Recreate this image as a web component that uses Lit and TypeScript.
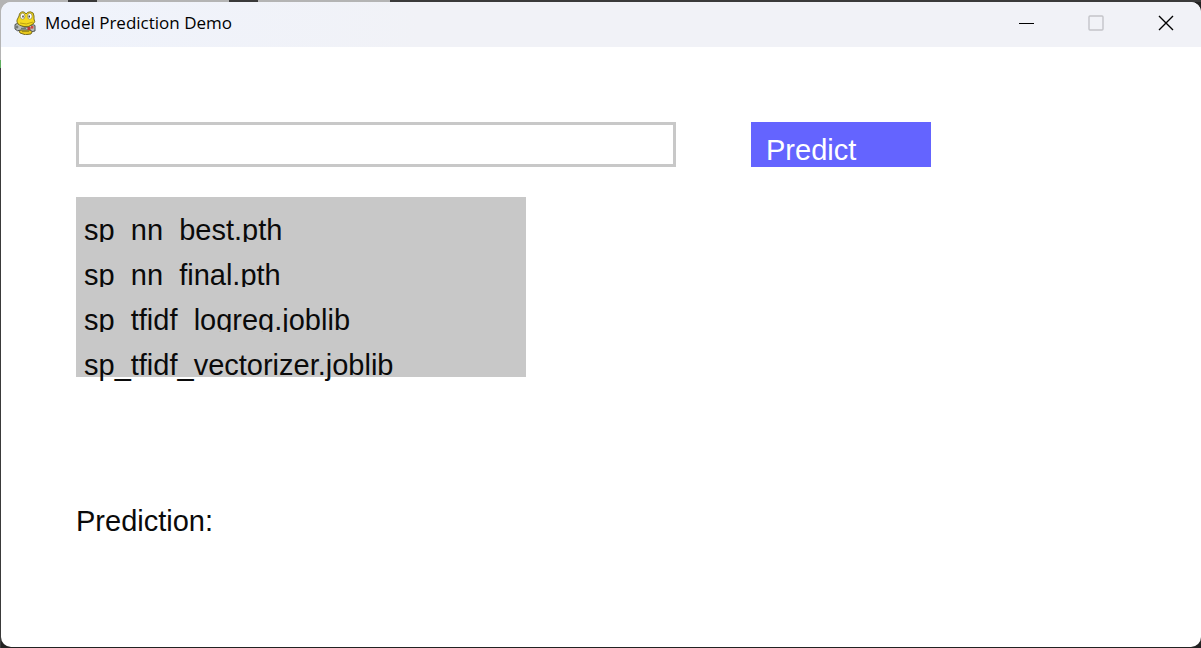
import { LitElement, html, css, svg } from "lit";
import { customElement, state } from "lit/decorators.js";

const snake = svg`
  <path d="M6 22 Q4 20 6 17 L17 17 Q20 20 17 23 Q11 25 6 22Z" fill="#e8c81c" stroke="#5a5218" stroke-width=".8"/>
  <path d="M8 20.5h7" stroke="#a38f14" stroke-width="1"/>
  <path d="M1 13.5 Q3 11.5 6 13.5 L10 16 L14 16 Q19 12.5 21 14.5 L21 20 Q18 21.5 16 19 L7 19 Q3 21 1 18Z" fill="#b9bdbb" stroke="#3f4442" stroke-width=".9"/>
  <path d="M3 14.5v3M1.8 16h2.6M7 17.3h5" stroke="#555b59" stroke-width=".9"/>
  <rect x="13.5" y="16" width="3" height="3" fill="#b83a38"/>
  <rect x="17" y="15" width="2.4" height="2.6" fill="#d04744"/>
  <path d="M3 9 Q4 7 5 5 Q5.5 .8 9 .8 Q11 1 12 3 Q13.5 .6 16.5 .8 Q20 1.2 20 5 L20 8 Q22 11 19 13 Q15 16.5 10 15.5 Q4 14.5 3 11Z" fill="#f5d91f" stroke="#6d6419" stroke-width=".9"/>
  <ellipse cx="8.6" cy="5.2" rx="2.3" ry="3" fill="#fff" stroke="#77702d" stroke-width=".6"/>
  <ellipse cx="15.8" cy="5.2" rx="2.3" ry="3" fill="#fff" stroke="#77702d" stroke-width=".6"/>
  <path d="M9 4.5v2M15.2 4.5v2" stroke="#222" stroke-width="1.3"/>
  <path d="M6 12 Q12 14.5 19 11" fill="none" stroke="#b49b12" stroke-width=".9"/>`;

@customElement("app-root")
export class AppRoot extends LitElement {
  static styles = css`
    :host {
      display: block;
      font-family: "Liberation Sans", Arial, sans-serif;
      font-size: 29px;
    }
    .desktop {
      box-sizing: border-box;
      min-height: 100vh;
      display: flex;
      padding: 2px 0 1px 1px;
      background:
        linear-gradient(90deg, #b4b4b4 68px, #3a3a3a 68px 97px, #b4b4b4 97px 229px, #3a3a3a 229px 258px, #b4b4b4 258px 390px, #3a3a3a 390px) top / 100% 2px no-repeat,
        linear-gradient(#b4b4b4 60px, #5fae5f 60px 68px, #3a3a3a 68px) left / 1px 100% no-repeat,
        linear-gradient(90deg, #b4b4b4 50%, #222 50%) top / 100% 12px no-repeat,
        #222;
    }
    .window {
      flex: 1;
      min-width: 0;
      display: flex;
      flex-direction: column;
      border-radius: 10px;
      overflow: hidden;
      background: #fff;
    }
    .titlebar {
      box-sizing: border-box;
      display: flex;
      align-items: center;
      height: 45px;
      padding: 0 0 3px 13px;
      background: linear-gradient(90deg, #eff3fc, #f1f2f7 35%);
    }
    .logo { width: 22px; height: 24px; }
    h1 {
      flex: 1;
      margin: 0 0 0 9px;
      font: 400 17px/24px "Open Sans", "Noto Sans", sans-serif;
      color: #000;
    }
    .control {
      width: 70px;
      height: 42px;
      padding: 0;
      border: 0;
      background: none;
      color: #000;
      display: grid;
      place-items: center;
    }
    .control:disabled { color: #c3c4c9; }
    .control svg { width: 16px; height: 16px; }
    main { padding: 75px; }
    form { display: flex; gap: 75px; }
    input {
      box-sizing: border-box;
      flex: 0 1 600px;
      min-width: 0;
      height: 45px;
      padding: 0 8px;
      border: 3px solid #c8c8c8;
      background: #fff;
      font: inherit;
      outline: none;
    }
    .predict {
      flex: 0 0 180px;
      height: 45px;
      padding: 11px 15px 0;
      border: 0;
      background: #6464ff;
      color: #fff;
      font: inherit;
      line-height: 34px;
      text-align: left;
    }
    ul {
      max-width: 450px;
      margin: 30px 0 0;
      padding: 0;
      list-style: none;
    }
    /* Every row paints over the descenders of the row above it. */
    li { height: 45px; isolation: isolate; background: #c8c8c8; }
    .model {
      display: block;
      width: 100%;
      height: 45px;
      padding: 21px 8px 0;
      border: 0;
      background: none;
      color: #0a0a0a;
      font: inherit;
      line-height: 24px;
      text-align: left;
      white-space: nowrap;
    }
    output {
      display: block;
      margin-top: 124px;
      line-height: 40px;
      color: #0a0a0a;
    }
  `;

  @state() private models = [
    "sp_nn_best.pth",
    "sp_nn_final.pth",
    "sp_tfidf_logreg.joblib",
    "sp_tfidf_vectorizer.joblib",
  ];
  @state() private selected = "";

  render() {
    return html`
      <div class="desktop">
        <div class="window">
          <header class="titlebar">
            <svg class="logo" viewBox="0 0 22 24" aria-hidden="true">${snake}</svg>
            <h1>Model Prediction Demo</h1>
            <button class="control" aria-label="Minimize">
              <svg viewBox="0 0 16 16"><path d="M1 8.5h15" stroke="currentColor" /></svg>
            </button>
            <button class="control" aria-label="Maximize" disabled>
              <svg viewBox="0 0 16 16"><rect x="1" y="1" width="14" height="14" rx="1" fill="none" stroke="currentColor" stroke-width="1.4" /></svg>
            </button>
            <button class="control" aria-label="Close">
              <svg viewBox="0 0 16 16"><path d="M1 1l14 14M15 1L1 15" stroke="currentColor" stroke-width="1.4" /></svg>
            </button>
          </header>
          <main>
            <form @submit=${(e: Event) => e.preventDefault()}>
              <input type="text" aria-label="Input text" />
              <button class="predict">Predict</button>
            </form>
            <ul>
              ${this.models.map(
                (m) => html`<li>
                  <button class="model" aria-pressed=${this.selected === m} @click=${() => (this.selected = m)}>${m}</button>
                </li>`
              )}
            </ul>
            <output>Prediction:</output>
          </main>
        </div>
      </div>
    `;
  }
}
